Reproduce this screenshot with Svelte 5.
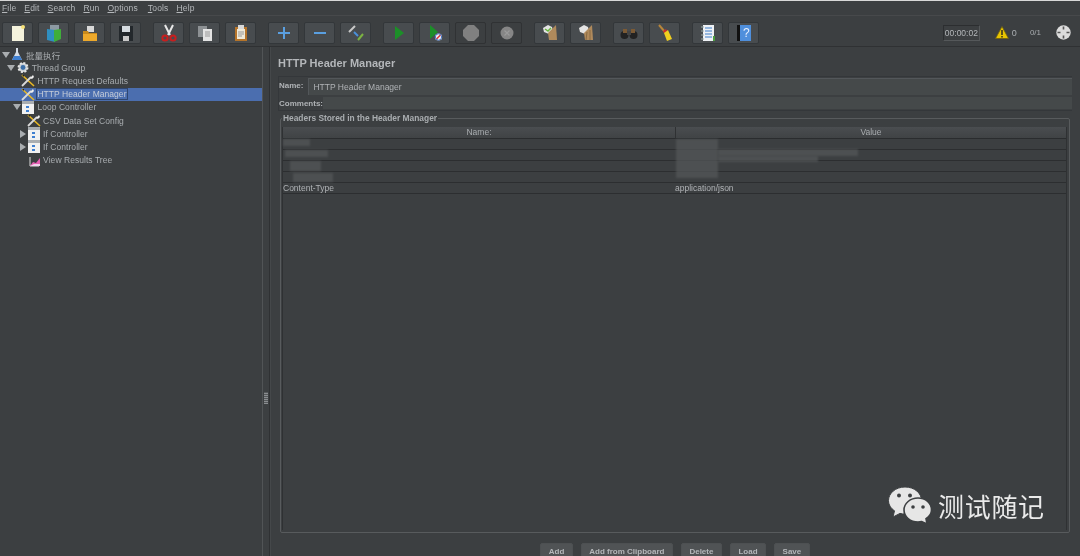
<script>
  const menus = ["File", "Edit", "Search", "Run", "Options", "Tools", "Help"];

  const toolGroups = [
    ["new", "templates", "open", "save"],
    ["cut", "copy", "paste"],
    ["plus", "minus", "toggle"],
    ["start", "startNoPause", "stop", "shutdown"],
    ["clear", "clearAll"],
    ["search", "broom"],
    ["list", "help"]
  ];

  const tree = [
    { label: "批量执行", level: 0, icon: "flask", arrow: "down" },
    { label: "Thread Group", level: 1, icon: "gear", arrow: "down" },
    { label: "HTTP Request Defaults", level: 2, icon: "wrench" },
    { label: "HTTP Header Manager", level: 2, icon: "wrench", selected: true },
    { label: "Loop Controller", level: 2, icon: "ctrl", arrow: "down" },
    { label: "CSV Data Set Config", level: 3, icon: "wrench" },
    { label: "If Controller", level: 3, icon: "ctrl", arrow: "right" },
    { label: "If Controller", level: 3, icon: "ctrl", arrow: "right" },
    { label: "View Results Tree", level: 3, icon: "chart" }
  ];

  const rows = ["", "", "", "", "Content-Type"];
  const values = ["", "", "", "", "application/json"];
  const buttons = ["Add", "Add from Clipboard", "Delete", "Load", "Save"];

  // blurred patches standing in for the redacted header rows
  const smears = [
    { x: 0, y: 0, w: 27, h: 7 },
    { x: 2, y: 11, w: 43, h: 7 },
    { x: 7, y: 22, w: 31, h: 10 },
    { x: 10, y: 34, w: 40, h: 9 },
    { x: 393, y: 0, w: 42, h: 39 },
    { x: 435, y: 10, w: 140, h: 7 },
    { x: 435, y: 17, w: 100, h: 6 }
  ];
</script>

{#snippet toolIcon(kind)}
  <svg class="ticon" viewBox="0 0 18 18" aria-hidden="true">
    {#if kind === "new"}
      <path d="M3 2h10l2 2v13H3z" fill="#f4f2dc" /><circle cx="14" cy="3" r="2" fill="#f6e27a" />
    {:else if kind === "templates"}
      <path d="M5 1h9v14H5z" fill="#8d9aa3" /><path d="M2 5l8 1v12l-8-2z" fill="#2f8fc0" /><path d="M9 6l7-1v10l-7 3z" fill="#3fae3a" />
    {:else if kind === "open"}
      <path d="M6 2h7v6H6z" fill="#d9d9d9" /><path d="M2 7h5l1 2h8v8H2z" fill="#c98a1c" /><path d="M2 10h14v7H2z" fill="#eda92b" />
    {:else if kind === "save"}
      <path d="M2 2h14v15H2z" fill="#23282c" /><path d="M5 2h8v6H5z" fill="#d5dbe0" /><path d="M6 12h6v5H6z" fill="#c9c9c9" />
    {:else if kind === "cut"}
      <path d="M5 1l5 10M13 1L8 11" stroke="#e8e8e8" stroke-width="2" fill="none" />
      <circle cx="5" cy="14" r="2.600" fill="none" stroke="#c81e1e" stroke-width="2" /><circle cx="13" cy="14" r="2.600" fill="none" stroke="#c81e1e" stroke-width="2" />
    {:else if kind === "copy"}
      <path d="M2 2h9v11H2z" fill="#8d9194" /><path d="M7 5h9v12H7z" fill="#e3e3e3" /><path d="M9 8h5M9 10h5M9 12h5" stroke="#999" stroke-width="1" />
    {:else if kind === "paste"}
      <path d="M3 3h12v14H3z" fill="#b5742a" /><path d="M5 5h8v10H5z" fill="#efe9d8" /><path d="M6 1h6v4H6z" fill="#d9d9d9" /><path d="M6 8h6M6 10h6M6 12h4" stroke="#999" stroke-width="1" />
    {:else if kind === "plus"}
      <path d="M9 3v12M3 9h12" stroke="#5a9fe0" stroke-width="2" />
    {:else if kind === "minus"}
      <path d="M3 9h12" stroke="#5a9fe0" stroke-width="2" />
    {:else if kind === "toggle"}
      <path d="M2 8l6-6" stroke="#c9c9c9" stroke-width="2" /><path d="M7 8l4 4" stroke="#4a90d9" stroke-width="2" /><path d="M11 16l5-6" stroke="#7cb342" stroke-width="2" />
    {:else if kind === "start"}
      <path d="M5 2l9 7-9 7z" fill="#1c8f28" />
    {:else if kind === "startNoPause"}
      <path d="M4 1l8 7-8 7z" fill="#1c8f28" /><circle cx="12.500" cy="13" r="3.600" fill="#eee" /><path d="M10.500 15l4-4" stroke="#d33" stroke-width="1.400" /><circle cx="12.500" cy="13" r="3.200" fill="none" stroke="#3568c0" stroke-width="0.900" />
    {:else if kind === "stop"}
      <path d="M6 1h6l5 5v6l-5 5H6l-5-5V6z" fill="#808080" />
    {:else if kind === "shutdown"}
      <circle cx="9" cy="9" r="6.500" fill="#868686" /><path d="M6.500 6.500l5 5M11.500 6.500l-5 5" stroke="#9b9b9b" stroke-width="1.200" />
    {:else if kind === "clear" || kind === "clearAll"}
      <path d="M2 4l5-3 4 2 1 4-4 3-5-2z" fill="#e4e4e4" /><path d="M7 9l8-8 1 15H8z" fill="#b08a5c" />
      {#if kind === "clear"}<path d="M4 5l3 2 3-3" stroke="#69b43c" stroke-width="1.500" fill="none" />{:else}<path d="M10 8l-1 8M13 6l0 10" stroke="#8a6a42" stroke-width="1" />{/if}
    {:else if kind === "search"}
      <circle cx="4.500" cy="11" r="4" fill="#222" /><circle cx="13.500" cy="11" r="4" fill="#222" /><path d="M3 5h4v4H3zM11 5h4v4h-4z" fill="#7c5a34" /><path d="M7 7h4v4H7z" fill="#444" />
    {:else if kind === "broom"}
      <path d="M3 1l6 7" stroke="#b8863a" stroke-width="2" /><path d="M7 7l3-2 1 2-3 2z" fill="#cf2a2a" /><path d="M8 9l4-3 4 9-5 2z" fill="#f1cf1f" />
    {:else if kind === "list"}
      <path d="M4 1h11v16H4z" fill="#eef1f5" /><path d="M6 4h7M6 7h7M6 10h7M6 13h7" stroke="#3d7ec9" stroke-width="1.200" /><path d="M2 3h3M2 7h3M2 11h3M2 15h3" stroke="#9aa" stroke-width="1.200" /><path d="M14 12h2v5h-2z" fill="#4a9b3f" />
    {:else if kind === "help"}
      <path d="M2 1h3v16H2z" fill="#111" /><path d="M5 1h11v16H5z" fill="#4f8fdc" /><text x="8" y="13" class="q">?</text>
    {/if}
  </svg>
{/snippet}

{#snippet treeIcon(kind)}
  <svg class="nicon" viewBox="0 0 14 13" aria-hidden="true">
    {#if kind === "flask"}
      <path d="M6 0h2v4l4 8H2l4-8z" fill="#d5dde6" /><path d="M4 8h6l2 4H2z" fill="#3f7fd0" />
    {:else if kind === "gear"}
      <circle cx="7" cy="6.500" r="4.500" fill="#c9ced3" stroke="#e6e6e6" stroke-width="2" stroke-dasharray="2 1.500" /><circle cx="7" cy="6.500" r="2.400" fill="#3a6ea8" />
    {:else if kind === "wrench"}
      <path d="M1 1l12 11" stroke="#e9b824" stroke-width="1.600" /><path d="M1 12L10 3" stroke="#d9d9d9" stroke-width="1.800" /><path d="M9 4l3-3 1 2-2 2z" fill="#eee" /><path d="M1 1l2 0 0 2z" fill="#222" />
    {:else if kind === "ctrl"}
      <path d="M1 0h12v13H1z" fill="#f1f1f1" /><path d="M1 0h12v3H1z" fill="#a9adb1" /><path d="M5 5h3v2H5zM5 9h3v2H5z" fill="#3f7fd0" />
    {:else if kind === "chart"}
      <path d="M3 12V3M3 12h9" stroke="#ddd" stroke-width="1" /><path d="M3 12l3-4 3 1 4-5v8z" fill="#e65fb4" /><path d="M3 12l4-2 6 0v2z" fill="#f0d3ea" />
    {/if}
  </svg>
{/snippet}

<div class="app">
  <nav class="menubar">
    {#each menus as m}
      <span class="menu"><u>{m[0]}</u>{m.slice(1)}</span>
    {/each}
  </nav>

  <header class="toolbar">
    {#each toolGroups as group}
      <div class="group">
        {#each group as t}
          <button class="tool" class:off={t === "stop" || t === "shutdown"}>{@render toolIcon(t)}</button>
        {/each}
      </div>
    {/each}
    <div class="status">
      <span class="timer">00:00:02</span>
      <svg class="warn" viewBox="0 0 14 13" aria-hidden="true">
        <path d="M7 0.500L13.500 12.500H0.500z" fill="#e8c400" stroke="#6d5f10" stroke-width="0.800" />
        <path d="M6.300 4h1.400v5H6.300zM6.300 10h1.400v1.400H6.300z" fill="#222" />
      </svg>
      <span class="count">0</span>
      <span class="threads">0/1</span>
      <svg class="globe" viewBox="0 0 15 15" aria-hidden="true">
        <circle cx="7.500" cy="7.500" r="7.200" fill="#dcdcdc" />
        <path d="M7.500 1.500v3M7.500 10.500v3M1.500 7.500h3M10.500 7.500h3" stroke="#555" stroke-width="1.600" />
      </svg>
    </div>
  </header>

  <main class="split">
    <aside class="tree">
      {#each tree as n}
        <div class="node" class:selected={n.selected} style="padding-left:{1 + n.level * 5.7}px">
          <span class="arrow">
            {#if n.arrow === "down"}<i class="down"></i>{:else if n.arrow === "right"}<i class="right"></i>{/if}
          </span>
          {@render treeIcon(n.icon)}
          <span class="label">{n.label}</span>
        </div>
      {/each}
    </aside>

    <div class="divider"><span class="grip"></span></div>

    <section class="panel">
      <h1>HTTP Header Manager</h1>

      <div class="fields">
        <div class="field">
          <b>Name:</b>
          <input value="HTTP Header Manager" />
        </div>
        <div class="field comments">
          <b>Comments:</b>
          <div class="area"></div>
        </div>
      </div>

      <fieldset>
        <legend>Headers Stored in the Header Manager</legend>
        <div class="table">
          <div class="thead">
            <span>Name:</span>
            <span>Value</span>
          </div>
          <div class="tbody">
            {#each rows as r, i}
              <div class="row">
                <span>{r}</span>
                <span>{values[i]}</span>
              </div>
            {/each}
            {#each smears as s}
              <i class="smear" style="left:{s.x}px;top:{s.y}px;width:{s.w}px;height:{s.h}px"></i>
            {/each}
          </div>
        </div>
      </fieldset>

      <div class="actions">
        {#each buttons as b}
          <button class="action">{b}</button>
        {/each}
      </div>
    </section>
  </main>

  <div class="mark">
    <svg class="wechat" viewBox="0 0 44 37" aria-hidden="true">
      <path d="M17 0C7.600 0 0.500 6.300 0.500 13.500c0 4.200 2.300 7.800 6 10.300L5 30l7-3.600c1.500.4 3.200.6 5 .6 9.400 0 16.500-6 16.500-13.500S26.400 0 17 0z" fill="#e6e6e6" stroke="#3c3f41" stroke-width="1" />
      <path d="M30 11c-7.700 0-14 5.300-14 12s6.300 12 14 12c1.300 0 2.500-.2 3.700-.5L39 37l-1-5.300c3.600-2.200 5.500-5.200 5.500-8.700C43.500 16.300 37.700 11 30 11z" fill="#e6e6e6" stroke="#3c3f41" stroke-width="1.600" />
      <circle cx="11" cy="8.500" r="2" fill="#3c3f41" /><circle cx="22" cy="8.500" r="2" fill="#3c3f41" />
      <circle cx="25" cy="20" r="1.800" fill="#3c3f41" /><circle cx="35" cy="20" r="1.800" fill="#3c3f41" />
    </svg>
    <span>测试随记</span>
  </div>
</div>

<style>
  :global(body) {
    margin: 0;
    background: #3c3f41;
  }
  .app {
    position: relative;
    display: flex;
    flex-direction: column;
    width: 1080px;
    height: 556px;
    overflow: hidden;
    background: #3c3f41;
    border-top: 1px solid #d8d8d8;
    box-sizing: border-box;
    font-family: "Liberation Sans", "Noto Sans CJK SC", sans-serif;
    font-size: 8.500px;
    color: #a9adb0;
    filter: blur(0.4px);
  }
  .menubar {
    display: flex;
    height: 15px;
    align-items: center;
    padding-left: 2px;
    gap: 8px;
    font-size: 8.500px;
    letter-spacing: 0.150px;
    color: #b4b7ba;
    border-bottom: 1px solid #47494b;
    box-sizing: border-box;
  }
  .menu:nth-child(5) { margin-right: 2px; }
  .toolbar {
    display: flex;
    align-items: center;
    height: 31px;
    padding: 3px 0 0 2px;
    gap: 12px;
    border-bottom: 1px solid #2f3133;
    box-sizing: border-box;
  }
  .group {
    display: flex;
    gap: 5px;
  }
  .tool {
    display: flex;
    align-items: center;
    justify-content: center;
    width: 31px;
    height: 22px;
    padding: 0;
    border: 1px solid #33373a;
    border-radius: 2px;
    background: #484c4f;
  }
  .tool.off {
    background: #3c3f41;
    border-color: #303234;
  }
  .ticon {
    width: 18px;
    height: 18px;
  }
  .q {
    font-size: 12px;
    font-family: "Liberation Sans", sans-serif;
    fill: #e6eefc;
  }
  .status {
    display: flex;
    align-items: center;
    margin-left: auto;
    padding-right: 9px;
  }
  .timer {
    display: block;
    width: 37px;
    height: 16px;
    line-height: 14px;
    box-sizing: border-box;
    border: 1px solid #2c2e30;
    border-right-color: #55585a;
    border-bottom-color: #55585a;
    text-align: center;
    font-size: 8.500px;
    color: #b4b7ba;
  }
  .warn {
    width: 14px;
    height: 13px;
    margin-left: 15px;
  }
  .count {
    margin-left: 3px;
    font-size: 9px;
  }
  .threads {
    margin-left: 13px;
    font-size: 8px;
  }
  .globe {
    width: 15px;
    height: 15px;
    margin-left: 15px;
  }
  .split {
    flex: 1;
    display: flex;
    min-height: 0;
  }
  .tree {
    width: 262px;
    flex: none;
    padding-top: 1px;
    box-sizing: border-box;
    background: #3c3f41;
  }
  .node {
    display: flex;
    align-items: center;
    height: 13.200px;
    box-sizing: border-box;
  }
  .node.selected {
    background: #4b6eaf;
  }
  .node.selected .label {
    outline: 1px solid #2f4670;
    color: #c5ccd8;
  }
  .arrow {
    display: flex;
    width: 9px;
    flex: none;
    justify-content: center;
  }
  .arrow i {
    display: block;
    width: 0;
    height: 0;
  }
  .arrow .down {
    border-left: 4px solid transparent;
    border-right: 4px solid transparent;
    border-top: 6px solid #a9adb0;
  }
  .arrow .right {
    border-top: 4px solid transparent;
    border-bottom: 4px solid transparent;
    border-left: 6px solid #a9adb0;
  }
  .nicon {
    width: 14px;
    height: 13px;
    flex: none;
  }
  .label {
    margin-left: 2px;
    white-space: nowrap;
    letter-spacing: 0.050px;
  }
  .divider {
    display: flex;
    align-items: center;
    justify-content: center;
    width: 8px;
    flex: none;
    box-sizing: border-box;
    border-left: 1px solid #515456;
    border-right: 1px solid #2f3133;
  }
  .grip {
    display: block;
    width: 4px;
    height: 12px;
    margin-top: 192px;
    background: repeating-linear-gradient(0deg, #8a8d90 0 1px, #55585a 1px 2px);
  }
  .panel {
    flex: 1;
    display: flex;
    flex-direction: column;
    min-width: 0;
    padding: 0 8px 0 7px;
    border-left: 1px solid #45484a;
  }
  h1 {
    margin: 9px 0 6px;
    font-size: 11px;
    line-height: 14px;
    font-weight: bold;
    color: #b4b7ba;
  }
  .fields {
    border: 1px solid #34373a;
    border-right: 0;
    height: 35px;
    box-sizing: border-box;
  }
  .field {
    display: flex;
    align-items: center;
    height: 18px;
    gap: 5px;
  }
  .field b {
    font-size: 8px;
    color: #b0b3b6;
    padding-bottom: 2px;
  }
  .comments b {
    padding-bottom: 0;
    padding-top: 2px;
  }
  input {
    flex: 1;
    height: 17px;
    min-width: 0;
    box-sizing: border-box;
    padding: 0 4px;
    border: 1px solid #53575a;
    border-width: 1px 0 0 1px;
    background: #45494a;
    color: #b0b3b6;
    font: 8.500px "Liberation Sans", sans-serif;
  }
  .comments {
    height: 15px;
    gap: 0;
  }
  .area {
    flex: 1;
    height: 12px;
    background: #45494a;
  }
  fieldset {
    flex: 1;
    min-height: 0;
    margin: 2px 2px 0 2px;
    padding: 0 1px;
    border: 1px solid #585b5d;
    border-radius: 2px;
  }
  legend {
    padding: 0 1px;
    margin-left: 0;
    font-size: 8.400px;
    font-weight: bold;
    line-height: 10px;
    color: #a9adb0;
  }
  .table {
    border-left: 1px solid #2f3133;
    border-right: 1px solid #2f3133;
    height: calc(100% - 6px);
    margin-top: 4px;
    margin-right: 1px;
  }
  .thead {
    display: grid;
    grid-template-columns: 392px 1fr;
    height: 12px;
    background: linear-gradient(#4a4d50, #404345);
    border-bottom: 1px solid #2a2c2e;
    box-sizing: border-box;
    text-align: center;
    line-height: 11px;
    font-size: 8.500px;
  }
  .thead span + span {
    border-left: 1px solid #2f3133;
  }
  .tbody {
    position: relative;
  }
  .row {
    display: grid;
    grid-template-columns: 392px 1fr;
    height: 11px;
    box-sizing: border-box;
    border-bottom: 1px solid #2c2e30;
    line-height: 11px;
    color: #b0b3b6;
    font-size: 8.500px;
  }
  .smear {
    position: absolute;
    background: #55585a;
    filter: blur(1.200px);
    opacity: 0.7;
  }
  .actions {
    display: flex;
    flex: none;
    justify-content: center;
    height: 23px;
    box-sizing: border-box;
    padding-top: 10px;
    gap: 8px;
  }
  .action {
    display: block;
    height: 20px;
    padding: 0 7.500px 4px;
    border: 1px solid #4d5052;
    border-radius: 2px;
    background: #505355;
    color: #b4b7ba;
    font: bold 8px "Liberation Sans", sans-serif;
    line-height: 16px;
  }
  .mark {
    position: absolute;
    left: 888px;
    top: 486px;
    display: flex;
    align-items: center;
    gap: 6px;
    color: #eaeaea;
    font-size: 26px;
    font-family: "Noto Sans CJK SC", sans-serif;
    letter-spacing: 0.700px;
  }
  .wechat {
    width: 44px;
    height: 37px;
  }
</style>
